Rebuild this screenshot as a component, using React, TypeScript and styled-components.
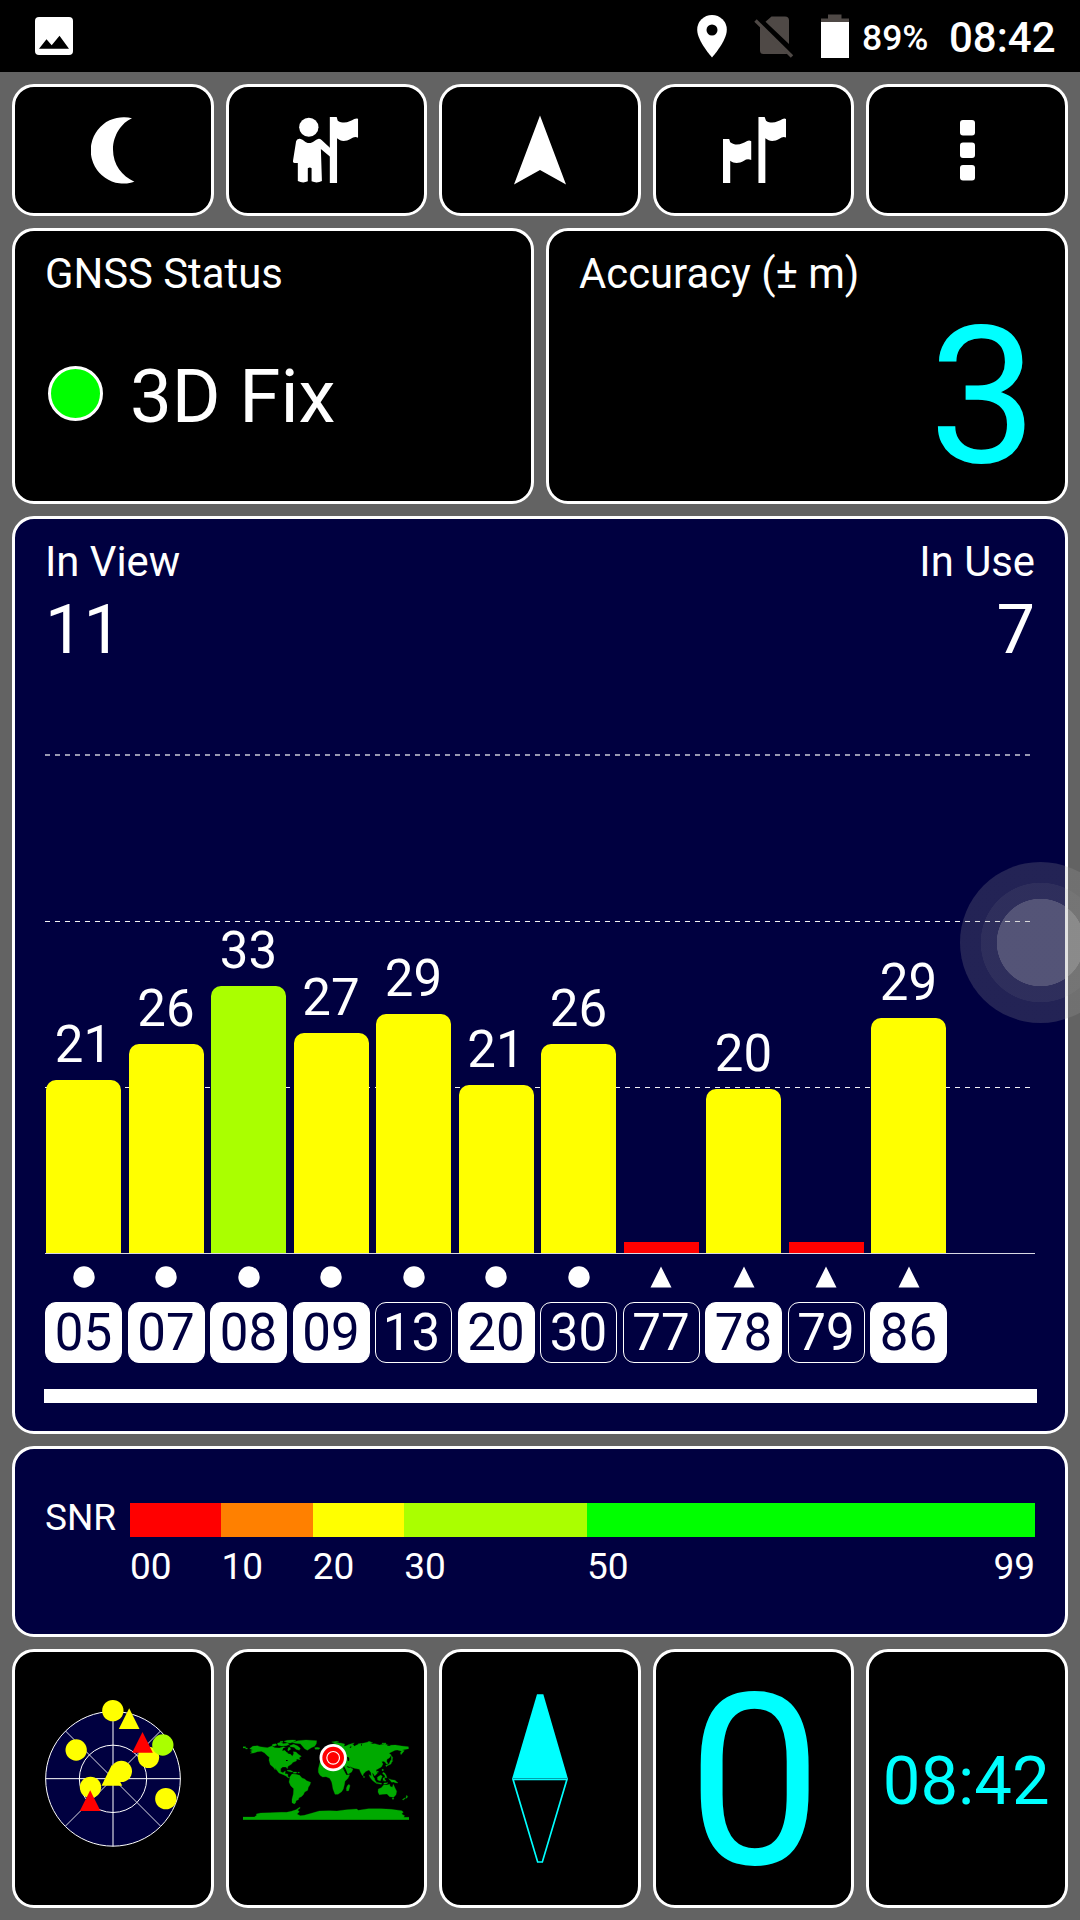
import React from "react";
import styled, { createGlobalStyle } from "styled-components";

const NAVY = "#000040";
const CYAN = "#00ffff";
const RED = "#ff0000";
const ORANGE = "#ff8000";
const YELLOW = "#ffff00";
const LIME = "#aaff00";
const GREEN = "#00ff00";
const LAND = "#00aa00";

const GlobalStyle = createGlobalStyle`
  * { box-sizing: border-box; }
  body {
    margin: 0;
    background: #636363;
    color: #fff;
    font-family: Roboto, "Liberation Sans", sans-serif;
  }
  svg { display: block; flex: none; }
`;

const Screen = styled.div`
  position: relative;
  width: 1080px;
  height: 1920px;
  overflow: hidden;
  background: #636363;
`;

/* Status bar */

const StatusBar = styled.header`
  display: flex;
  align-items: flex-start;
  height: 72px;
  padding: 0 24px 0 35px;
  background: #000;
`;

const StatusIcon = styled.svg<{ $top: number; $after?: number }>`
  margin-top: ${(p) => p.$top}px;
  margin-right: ${(p) => p.$after ?? 0}px;
`;

const Spacer = styled.div`
  flex: 1;
`;

const StatusText = styled.span<{ $size: number; $top: number; $width: number }>`
  width: ${(p) => p.$width}px;
  margin-top: ${(p) => p.$top}px;
  font-size: ${(p) => p.$size}px;
  line-height: 40px;
  font-weight: 500;
  text-align: left;
  white-space: nowrap;
`;

/* Panels */

const Main = styled.main`
  display: flex;
  flex-direction: column;
  gap: 12px;
  padding: 12px;
`;

const Row = styled.div<{ $height: number }>`
  display: grid;
  grid-auto-flow: column;
  grid-auto-columns: minmax(0, 1fr);
  gap: 12px;
  height: ${(p) => p.$height}px;
`;

const Tile = styled.div<{ $nudge?: number; $shift?: number }>`
  min-width: 0;
  display: flex;
  align-items: center;
  justify-content: center;
  padding-top: ${(p) => p.$nudge ?? 0}px;
  padding-left: ${(p) => Math.max(p.$shift ?? 0, 0)}px;
  padding-right: ${(p) => Math.max(-(p.$shift ?? 0), 0)}px;
  border: 3px solid #fff;
  border-radius: 22px;
  background: #000;
`;

const Panel = styled.section<{ $navy?: boolean; $height?: number }>`
  height: ${(p) => (p.$height ? `${p.$height}px` : "auto")};
  padding: 18px 30px 0;
  border: 3px solid #fff;
  border-radius: 22px;
  background: ${(p) => (p.$navy ? NAVY : "#000")};
`;

const Title = styled.div`
  font-size: 41.8px;
  line-height: 50px;
  white-space: nowrap;
`;

const FixRow = styled.div`
  display: flex;
  align-items: center;
  gap: 27px;
  height: 189px;
  padding-left: 3px;
`;

const FixLamp = styled.span`
  width: 55px;
  height: 55px;
  border: 3px solid #fff;
  border-radius: 50%;
  background: ${GREEN};
`;

const FixText = styled.span`
  padding-top: 6px;
  font-size: 74.5px;
  line-height: 80px;
`;

const AccuracyValue = styled.div`
  margin: 2px -2px 0 0;
  color: ${CYAN};
  font-size: 192px;
  line-height: 191px;
  text-align: right;
`;

/* Signal chart */

const Counts = styled.div`
  display: flex;
  justify-content: space-between;
`;

const Count = styled.div<{ $right?: boolean }>`
  text-align: ${(p) => (p.$right ? "right" : "left")};
`;

const CountValue = styled.div`
  margin-top: 8px;
  font-size: 68.5px;
  line-height: 70px;
`;

const Plot = styled.div`
  display: grid;
  height: 500px;
  margin-top: 89.4px;
`;

const GridLines = styled.div`
  grid-area: 1 / 1;
  display: flex;
  flex-direction: column;
  height: 334px;
  justify-content: space-between;
`;

const GridLine = styled.div<{ $soft?: boolean }>`
  width: 985px;
  height: ${(p) => (p.$soft ? 2 : 1)}px;
  opacity: ${(p) => (p.$soft ? 0.6 : 0.95)};
  background: repeating-linear-gradient(90deg, #fff 0 5px, transparent 5px 10px);
`;

const Bars = styled.div`
  grid-area: 1 / 1;
  z-index: 1;
  display: grid;
  grid-template-columns: repeat(12, 82.5px);
  height: 500px;
  border-bottom: 1px solid #d8d8e4;
`;

const BarColumn = styled.div`
  display: flex;
  flex-direction: column;
  align-items: center;
  justify-content: flex-end;
  width: 77px;
`;

const BarValue = styled.div`
  margin-bottom: 9px;
  font-size: 51px;
  line-height: 52px;
`;

const Bar = styled.div<{ $color: string; $flat?: boolean }>`
  width: 75px;
  border-radius: ${(p) => (p.$flat ? "0" : "10px 10px 0 0")};
  background: ${(p) => p.$color};
`;

const Legend = styled.div`
  display: grid;
  grid-template-columns: repeat(12, 82.5px);
  margin-top: 12px;
`;

const LegendItem = styled.div`
  display: flex;
  flex-direction: column;
  align-items: center;
  gap: 14px;
  width: 77px;
`;

const Chip = styled.div<{ $used: boolean; $leadingOne: boolean }>`
  width: 77px;
  height: 61px;
  padding-right: ${(p) => (p.$leadingOne ? 4 : 0)}px;
  border: 1.5px solid #fff;
  border-radius: 11px;
  background: ${(p) => (p.$used ? "#fff" : "transparent")};
  color: ${(p) => (p.$used ? NAVY : "#fff")};
  font-size: 51px;
  line-height: 60px;
  text-align: center;
`;

const ScrollTrack = styled.div`
  height: 14px;
  margin: 26px -2px 0 -1px;
  background: #fff;
`;

/* SNR scale */

const Scale = styled.div`
  display: grid;
  grid-template-columns: 85px 1fr;
  padding-top: 36px;
`;

const ScaleName = styled.div`
  margin-top: -2px;
  font-size: 37px;
  line-height: 34px;
`;

const ScaleGrid = styled.div`
  display: grid;
  grid-template-columns: 10fr 10fr 10fr 20fr 49fr;
`;

const Segment = styled.div<{ $color: string }>`
  height: 34px;
  background: ${(p) => p.$color};
`;

const Tick = styled.div`
  display: flex;
  justify-content: space-between;
  margin-top: 7.5px;
  font-size: 37px;
  line-height: 44px;
`;

/* Bottom tiles */

const Speed = styled.span`
  color: ${CYAN};
  font-size: 240px;
  line-height: 240px;
`;

const Clock = styled.span`
  color: ${CYAN};
  font-size: 67px;
  line-height: 70px;
`;

const FloatingButton = styled.div`
  position: absolute;
  z-index: 2;
  left: 960px;
  top: 862px;
  width: 161px;
  height: 161px;
  border-radius: 50%;
  background: radial-gradient(
    circle,
    rgba(186, 186, 186, 0.45) 43.5px,
    rgba(160, 160, 160, 0.29) 44px 59.5px,
    rgba(159, 159, 159, 0.22) 60px
  );
`;

type Satellite = {
  id: string;
  snr?: number;
  height: number;
  used: boolean;
  glonass?: boolean;
};

const satellites: Satellite[] = [
  { id: "05", snr: 21, height: 173, used: true },
  { id: "07", snr: 26, height: 208.6, used: true },
  { id: "08", snr: 33, height: 266.6, used: true },
  { id: "09", snr: 27, height: 219.6, used: true },
  { id: "13", snr: 29, height: 238.6, used: false },
  { id: "20", snr: 21, height: 167.6, used: true },
  { id: "30", snr: 26, height: 208.6, used: false },
  { id: "77", height: 10.6, used: false, glonass: true },
  { id: "78", snr: 20, height: 163.6, used: true, glonass: true },
  { id: "79", height: 10.6, used: false, glonass: true },
  { id: "86", snr: 29, height: 234.6, used: true, glonass: true },
];

const barColor = (snr?: number) => {
  if (snr === undefined || snr < 10) return RED;
  if (snr < 20) return ORANGE;
  if (snr < 30) return YELLOW;
  if (snr < 50) return LIME;
  return GREEN;
};

const segmentColors = [RED, ORANGE, YELLOW, LIME, GREEN];

const MoonIcon = () => (
  <svg width="44" height="68" viewBox="90 116 44 68">
    <path d="M131 118.3A32.8 33.2 0 1 0 133.4 181.7C121 176 112 165 112 149.5C112 135 121 122.500 131 118.3Z" fill="#fff" />
  </svg>
);

const GuideIcon = () => (
  <svg width="65.4" height="66" viewBox="852 351 190 198" preserveAspectRatio="none" fill="#fff">
    <ellipse cx="898" cy="381.500" rx="28" ry="28.500" />
    <path d="M861 424Q863 415 872 416C884 418 887 429 899 429C911 429 916 419 927 416Q931 416 935 420L960 444V470L933 447L936 543Q922 551 906 544V505Q901 500 895 505V544Q881 551 866 543V489L857 489Q851 488 852 482Z" />
    <path d="M959 351H979L982 362C1002 375 1018 363 1030 357Q1036 354 1041 356V413Q1031 408 1020 416C1005 425 991 425 980 415V549H959Z" />
  </svg>
);

const NavigateIcon = () => (
  <svg width="52" height="70" viewBox="514 114 52 70">
    <path d="M540 114.500L566 183.500L540 169L514 183.500Z" fill="#fff" />
  </svg>
);

const FlagsIcon = () => (
  <svg width="63.700" height="66" viewBox="531 351 185 198" preserveAspectRatio="none" fill="#fff">
    <path d="M634 351H652L656 362C674 375 692 363 704 357Q711 354 716 358V413Q705 408 695 416C680 425 666 425 654 415V549H634Z" />
    <path d="M531 417H549L552 427C571 441 589 430 601 423Q608 420 613 424V480Q602 475 592 482C577 491 563 491 552 482V549H531Z" />
  </svg>
);

const MoreIcon = () => (
  <svg width="15" height="62" viewBox="0 0 15 62" fill="#fff">
    <rect x="0" y="1" width="15" height="15.500" rx="3" />
    <rect x="0" y="23.500" width="15" height="15.500" rx="3" />
    <rect x="0" y="46" width="15" height="15.500" rx="3" />
  </svg>
);

const SkyDot = ({ x, y, color = YELLOW }: { x: number; y: number; color?: string }) => (
  <circle cx={x} cy={y} r="32" fill={color} />
);

const SkyTriangle = ({ x, y, color }: { x: number; y: number; color: string }) => (
  <path d={`M${x} ${y}l31 62h-62z`} fill={color} />
);

const SkyView = () => (
  <svg width="140" height="162" viewBox="38.500 24 420 486">
    <g fill={NAVY} stroke="#fff" strokeWidth="3">
      <circle cx="248.500" cy="266.500" r="202" />
      <circle cx="248.500" cy="266.500" r="101" />
      <path d="M46 266H451M248.500 64V469" />
      <path d="M106 123L391 408M391 123L106 408" strokeWidth="2.600" />
    </g>
    <SkyDot x={355} y={202} />
    <SkyDot x={398} y={165} color={LIME} />
    <SkyDot x={248} y={62} />
    <SkyDot x={138} y={180} />
    <SkyDot x={407} y={326} />
    <SkyDot x={181} y={292} />
    <SkyDot x={273.5} y={244} />
    <SkyTriangle x={297} y={55} color={YELLOW} />
    <SkyTriangle x={337} y={126} color={RED} />
    <SkyTriangle x={180} y={301} color={RED} />
    <SkyTriangle x={245} y={225} color={YELLOW} />
  </svg>
);

const WorldMap = () => (
  <svg width="166" height="83" viewBox="25 51 498 249">
    <g fill={LAND} stroke={LAND} strokeWidth="0.800">
      <path d="M45 86L54 79L68 77L76 80L98 83L112 78L120 83L134 84L146 80L158 84L166 82L168 88L157 95L160 101L168 103L173 109L177 101L176 95L184 96L190 102L200 109L193 114L197 119L186 117L185 123L175 127L170 133L160 139L158 146L154 141L144 141L138 146L138 155L145 158L152 153L151 161L159 162L160 170L165 173L160 173L154 168L146 164L133 159L126 150L120 143L122 150L116 142L107 134L103 121L104 112L98 107L89 98L80 94L68 95L57 99L47 100L53 96L47 93L54 90Z" />
      <path d="M25 80h8v4h-8zM33 84h5v3h-5zM128 70l10-3 8 4 12-2 6 4-9 4-15 1-10-2zM114 73l9-2 4 4-8 4-7-2zM148 64l10-3 16-1 10 1-7 4-10 4-8-1zM137 64h8v3h-8zM165 77l12-4 12 5 8 7-3 6-10-3-6-6-11-2z" />
      <path d="M173 67L190 62L214 60L246 62L245 71L240 79L230 83L218 91L210 86L203 78L197 71L182 70Z" />
      <path d="M240 83l8-1 8 2-3 4-11 0z" />
      <path d="M158 151h9l8 4-5 1-12-3zM176 156h7l5 2-5 2h-7zM190 157h4v2h-4z" />
      <path d="M166 170L172 162L183 163L195 166L202 174L210 177L216 182L228 187L226 194L221 202L219 211L210 216L206 224L200 230L193 233L191 239L184 242L183 248L179 252L172 248L172 238L176 222L177 206L168 197L163 186L165 177Z" />
      <path d="M257 119L270 117L283 119L285 114L280 108L274 111L266 111L258 109L259 101L268 100L266 94L274 91L281 87L282 80L290 85L301 81L309 78L305 72L297 77L291 80L287 78L292 73L303 69L318 69L330 72L328 79L333 78L344 77L355 73L359 79L366 75L374 72L388 69L404 65L414 68L407 72L421 71L434 75L450 72L463 76L482 75L501 78L521 80L522 86L514 88L503 90L509 92L504 98L499 104L497 98L501 94L488 90L481 91L472 95L463 100L470 105L464 114L457 118L456 124L460 131L455 132L451 126L446 124L441 125L445 132L440 141L428 148L424 150L428 160L420 168L417 162L412 158L416 170L421 178L416 178L410 170L409 158L403 150L394 154L386 162L385 168L382 165L377 155L374 148L359 145L348 141L344 136L348 144L355 147L351 156L340 163L330 149L322 137L322 131L306 126L307 121L298 115L292 111L286 120Z" />
      <path d="M257 123L267 125L283 130L291 132L305 134L321 138L329 154L335 165L345 164L340 175L331 184L329 195L326 207L321 215L310 223L301 223L295 207L293 196L291 186L285 175L274 170L264 171L256 166L251 157L251 146Z" />
      <path d="M343 193l3 4-4 15-6 1-1-8 3-8zM258 95l5-4 4 10 0 5-9 2 2-7zM333 79l8-5 9-3 9-2-7 5-12 6-4 1zM387 168l3 2-1 3-3-1zM400 65h7v4h-7zM371 71h8v3h-8zM442 69h12v2h-12zM291 66l15-2 7 2-12 3z" />
      <path d="M470 107l4 5-1 8-3 3v-8zM468 121l7 1-4 5-2 5-11 5-3 3-2-4 10-4zM442 148h4v4h-4zM427 154h4v3h-4z" />
      <path d="M403 164l8 5 8 9 6 8-3 2-9-7-7-9zM423 187l9 1 9 2-1 3-16-3zM428 172l10-7 5 4-4 9-2 5-8-3zM445 174l9-2-5 4 5 7-4 1-3-5-2 5zM445 157l6 3 4 7 2 7-5-2-3-8-5-2zM462 176l8 3 11 2 9 8-8-1-5-2-6 1-5-6zM448 189l12-1-5 4-8 1z" />
      <path d="M431 207L440 203L447 195L456 195L465 193L466 199L473 202L476 193L481 204L486 214L484 224L477 232L465 230L457 222L444 223L434 224L430 216ZM472 234h6l-3 5zM516 226l3 3-2 5-4 1zM512 235l-6 5-3-1 6-5z" />
      <path d="M25 299V291H59L66 286L65 282L78 279L107 278L138 277L156 277L170 274L184 269L195 262L197 264L189 270L194 275L187 282L197 287L209 286L233 279L254 273L284 272L307 273L336 269L366 267L371 271L402 266L438 266L469 268L501 272L506 276L501 282L510 287L507 292H523V299Z" />
    </g>
    <g fill="#000">
      <path d="M137 107l3-8 10-4 6 3-2 5 2 8-4 1-7-7z" transform="translate(14 -8) scale(.94)" />
      <path d="M337 111h4l3 5-1 7-4-1zM324 137l4 2 7 13 3 10-4-4zM154 120h5v3h-5zM339 139l7 3-2 2-8-4z" />
      <path d="M345 81l5-2v3l-4 2zM314 78h6v4h-6zM379 72h2v5h-2zM458 76h9v2h-9z" />
    </g>
    <circle cx="295.500" cy="113" r="41" fill="#fff" />
    <circle cx="295.500" cy="113" r="32.500" fill={RED} />
    <circle cx="295.500" cy="113.500" r="19" fill={RED} stroke="#fff" strokeWidth="3.500" />
  </svg>
);

const Compass = () => (
  <svg width="60" height="172" viewBox="60 38 180 516">
    <path d="M141 42H160L234 296H66Z" fill={CYAN} />
    <path d="M69 297H231L157 545H143Z" fill="none" stroke={CYAN} strokeWidth="5" />
    <path d="M68 294.500H232" stroke="#008f9c" strokeWidth="2.500" />
  </svg>
);

export default function App() {
  return (
    <Screen>
      <GlobalStyle />
      <StatusBar>
        <StatusIcon $top={17} width="38" height="38" viewBox="0 0 38 38">
          <rect width="38" height="38" rx="4" fill="#fff" />
          <path d="M4 31.800L11.500 22.300L16.700 28.300L24.500 18.800L34 31.800Z" fill="#000" />
        </StatusIcon>
        <Spacer />
        <StatusIcon $top={15} $after={27.5} width="30" height="43" viewBox="0 0 30 43">
          <path
            d="M15 0A14.800 14.800 0 0 0 .2 14.800C.2 26 15 42.500 15 42.500S29.800 26 29.800 14.800A14.800 14.800 0 0 0 15 0Z"
            fill="#fff"
          />
          <circle cx="15" cy="15" r="5.500" fill="#000" />
        </StatusIcon>
        <StatusIcon $top={16} $after={27} width="40" height="43" viewBox="0 0 40 43">
          <path d="M17.500 .5H31Q35 .5 35 4.500V28L11.500 5.800ZM6 9L33.500 38H9.500Q6 38 6 34.500Z" fill="#4f4946" />
          <path d="M1.500 4.500L38 40.500" stroke="#4f4946" strokeWidth="3.400" />
        </StatusIcon>
        <StatusIcon $top={14} $after={13} width="28" height="44" viewBox="0 0 28 44">
          <path d="M7 0.500H20.500V4.500H28V8H0V4.500H7Z" fill="#4f4946" />
          <rect y="8" width="28" height="36" fill="#fff" />
        </StatusIcon>
        <StatusText $size={35.5} $top={18} $width={87}>89%</StatusText>
        <StatusText $size={42} $top={18} $width={107}>08:42</StatusText>
      </StatusBar>

      <Main>
        <Row $height={132}>
          <Tile><MoonIcon /></Tile>
          <Tile $shift={-1}><GuideIcon /></Tile>
          <Tile><NavigateIcon /></Tile>
          <Tile $shift={2}><FlagsIcon /></Tile>
          <Tile><MoreIcon /></Tile>
        </Row>

        <Row $height={275.6}>
          <Panel>
            <Title>GNSS Status</Title>
            <FixRow>
              <FixLamp />
              <FixText>3D Fix</FixText>
            </FixRow>
          </Panel>
          <Panel>
            <Title>Accuracy (± m)</Title>
            <AccuracyValue>3</AccuracyValue>
          </Panel>
        </Row>

        <Panel $navy $height={918.8}>
          <Counts>
            <Count>
              <Title>In View</Title>
              <CountValue>11</CountValue>
            </Count>
            <Count $right>
              <Title>In Use</Title>
              <CountValue>7</CountValue>
            </Count>
          </Counts>
          <Plot>
            <GridLines>
              <GridLine $soft />
              <GridLine />
              <GridLine />
            </GridLines>
            <Bars>
              {satellites.map((s) => (
                <BarColumn key={s.id}>
                  {s.snr !== undefined && <BarValue>{s.snr}</BarValue>}
                  <Bar $color={barColor(s.snr)} $flat={s.snr === undefined} style={{ height: s.height }} />
                </BarColumn>
              ))}
            </Bars>
          </Plot>
          <Legend>
            {satellites.map((s) => (
              <LegendItem key={s.id}>
                <svg width="22" height="22" viewBox="0 0 22 22" fill="#fff">
                  {s.glonass ? <path d="M11 .5L21.500 21.500H.5Z" /> : <circle cx="11" cy="11" r="10.700" />}
                </svg>
                <Chip $used={s.used} $leadingOne={s.id.startsWith("1")}>{s.id}</Chip>
              </LegendItem>
            ))}
          </Legend>
          <ScrollTrack />
        </Panel>

        <Panel $navy $height={191}>
          <Scale>
            <ScaleName>SNR</ScaleName>
            <ScaleGrid>
              {segmentColors.map((c) => (
                <Segment key={c} $color={c} />
              ))}
              <Tick>00</Tick>
              <Tick>10</Tick>
              <Tick>20</Tick>
              <Tick>30</Tick>
              <Tick>
                <span>50</span>
                <span>99</span>
              </Tick>
            </ScaleGrid>
          </Scale>
        </Panel>

        <Row $height={258.6}>
          <Tile><SkyView /></Tile>
          <Tile><WorldMap /></Tile>
          <Tile><Compass /></Tile>
          <Tile $nudge={6} $shift={2}><Speed>0</Speed></Tile>
          <Tile $nudge={5} $shift={-2}><Clock>08:42</Clock></Tile>
        </Row>
      </Main>

      <FloatingButton />
    </Screen>
  );
}
